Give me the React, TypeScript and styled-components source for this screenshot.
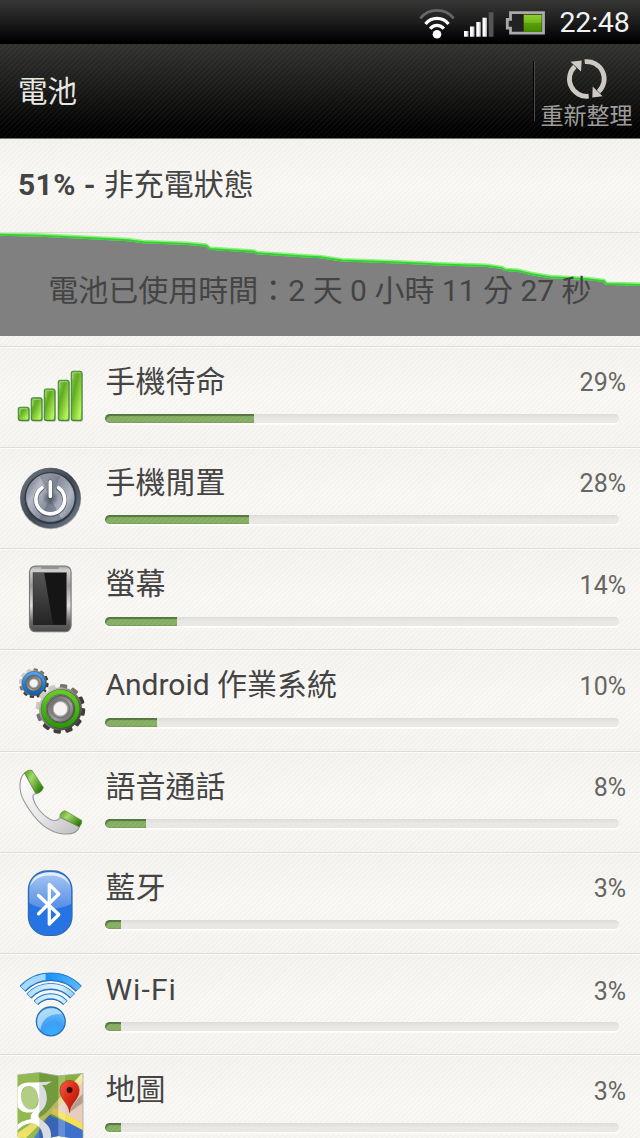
import type { FC } from 'react';
import styled, { createGlobalStyle, css } from 'styled-components';

const Color = {
  TEXT: '#444444',
  TEXT_SUB: '#666664',
  LINE: '#dedcd8',
  PAPER: '#f7f6f3',
  GREEN: '#84ad62',
  CHART: '#808080',
};

const FONT = `Roboto, 'Noto Sans CJK TC', sans-serif`;
const ROW_HEIGHT = 101.25;

const GlobalStyle = createGlobalStyle`
  body {
    margin: 0;
    background: ${Color.PAPER};
    overflow: hidden;
  }
`;

const paperTexture = css`
  background-image: repeating-linear-gradient(
      135deg,
      rgba(120, 110, 80, 0.035) 0,
      rgba(120, 110, 80, 0.035) 1.2px,
      transparent 1.6px,
      transparent 3.2px,
      rgba(120, 110, 80, 0.035) 3.6px
    ),
    linear-gradient(#f5f4f1, #faf9f6 50%, #f6f5f2);
`;

const Screen = styled.div`
  width: 640px;
  height: 1138px;
  overflow: hidden;
  display: flex;
  flex-direction: column;
  font-family: ${FONT};
  color: ${Color.TEXT};
`;

const StatusBarArea = styled.div`
  flex: none;
  box-sizing: border-box;
  height: 44px;
  padding-right: 11px;
  display: flex;
  justify-content: flex-end;
  align-items: flex-start;
  background: linear-gradient(#373736, #1c1c1c 50%, #000 95%);

  svg {
    display: block;
    flex: none;
  }
`;

const WifiStatus = styled.svg`
  margin: 8px 8px 0 0;
`;

const SignalStatus = styled.svg`
  margin: 12px 11px 0 0;
`;

const BatteryStatus = styled.svg`
  margin: 10px 14px 0 0;
`;

const Clock = styled.span`
  width: 69.5px;
  font-size: 28.5px;
  line-height: 46px;
  letter-spacing: -0.2px;
  white-space: nowrap;
  color: #f2f2f2;
`;

const HeaderArea = styled.header`
  flex: none;
  box-sizing: border-box;
  height: 94.5px;
  display: flex;
  align-items: flex-start;
  border-bottom: 1px solid #77716f;
  background-image: repeating-linear-gradient(
      135deg,
      rgba(255, 255, 255, 0.035) 0,
      rgba(255, 255, 255, 0.035) 1px,
      transparent 1.6px,
      transparent 3.2px,
      rgba(255, 255, 255, 0.035) 3.8px
    ),
    linear-gradient(#313130, #1c1c1b 42%, #000 92%);
`;

const HeaderTitle = styled.h1`
  flex: 1;
  margin: 0;
  padding: 24.5px 0 0 18px;
  font-size: 29.5px;
  font-weight: 400;
  line-height: 46px;
  color: #eae8e3;
`;

const Divider = styled.div`
  width: 1px;
  height: 60px;
  margin-top: 17px;
  border-left: 1px solid #000;
  background: #4a4a4a;
`;

const RefreshButton = styled.button`
  width: 105px;
  padding: 13px 2px 0 0;
  border: 0;
  background: none;
  display: flex;
  flex-direction: column;
  align-items: center;
  font-family: inherit;
  font-size: 23px;
  line-height: 32px;
  white-space: nowrap;
  color: #9f9d9a;

  svg {
    display: block;
  }
`;

const Summary = styled.section`
  flex: none;
  box-sizing: border-box;
  height: 94.5px;
  padding: 23px 18px 0;
  border-bottom: 1px solid ${Color.LINE};
  font-size: 30px;
  line-height: 46px;
  ${paperTexture}
`;

const Level = styled.b`
  font-weight: 700;
  letter-spacing: 0.4px;
`;

const HistoryArea = styled.section`
  flex: none;
  box-sizing: border-box;
  position: relative;
  height: 113.5px;
  border-bottom: 1px solid ${Color.LINE};
  ${paperTexture}

  svg {
    display: block;
  }
`;

const Elapsed = styled.p`
  position: absolute;
  top: 35px;
  left: 0;
  width: 100%;
  margin: 0;
  font-size: 30px;
  line-height: 46px;
  text-align: center;
  white-space: nowrap;
`;

const UsageList = styled.ul`
  flex: none;
  margin: 0;
  padding: 0;
  list-style: none;
`;

const UsageRow = styled.li`
  box-sizing: border-box;
  height: ${ROW_HEIGHT}px;
  display: flex;
  padding-left: 15px;
  border-bottom: 1px solid ${Color.LINE};
  box-shadow: inset 0 1px 0 #fcfbf9;
  ${paperTexture}
`;

const Icon = styled.svg`
  flex: none;
  display: block;
  margin-top: 14px;
`;

const Detail = styled.div`
  flex: 1;
  padding: 11.5px 14px 0 18.4px;
`;

const Caption = styled.div<{ $latin: boolean }>`
  height: 46px;
  display: flex;
  justify-content: space-between;
  line-height: 46px;
  white-space: nowrap;
  padding-top: ${({ $latin }) => ($latin ? 1 : 0)}px;
  margin-bottom: ${({ $latin }) => ($latin ? -1 : 0)}px;
`;

const Name = styled.span<{ $latin: boolean }>`
  padding-top: ${({ $latin }) => ($latin ? 0 : 0.5)}px;
  font-size: 30px;
  letter-spacing: ${({ $latin }) => ($latin ? '1.1px' : 'normal')};
`;

const Percent = styled.span`
  font-size: 25px;
  padding-top: 2px;
  color: ${Color.TEXT_SUB};
`;

const Track = styled.div`
  width: 513.5px;
  height: 9px;
  margin-top: 10px;
  border-radius: 4.5px;
  overflow: hidden;
  background: linear-gradient(#dddcd8, #e9e8e5 50%);
  box-shadow: 0 1px 0 #ffffff, 0 2px 0 rgba(255, 255, 255, 0.6);
`;

const Fill = styled.div`
  height: 100%;
  border-radius: 4.5px 0 0 4.5px;
  box-shadow: inset 1px 2px 1px rgba(50, 80, 40, 0.6), inset 0 -1px 0 rgba(80, 110, 60, 0.25);
  background: repeating-linear-gradient(
    135deg,
    ${Color.GREEN} 0,
    ${Color.GREEN} 2px,
    #91b872 2.8px,
    ${Color.GREEN} 3.6px
  );
`;

const SIGNAL_BARS = [
  { x: 3.3, y: 46.3 },
  { x: 16.3, y: 36.9 },
  { x: 29.3, y: 28 },
  { x: 43.3, y: 19.3 },
  { x: 56.3, y: 10.3 },
];

const SignalIcon: FC = () => (
  <Icon height={72} viewBox="0 0 72 72" width={72}>
    <defs>
      <linearGradient id="bar" x1="0" x2="1" y1="0" y2="1">
        <stop offset="0" stopColor="#8fc95c" />
        <stop offset="0.35" stopColor="#62ab20" />
        <stop offset="0.85" stopColor="#b9f75f" />
        <stop offset="1" stopColor="#8ed73a" />
      </linearGradient>
    </defs>
    {SIGNAL_BARS.map(({ x, y }) => (
      <g key={x}>
        <rect fill="#777" fillOpacity="0.5" height={60.3 - y} rx="2.5" width="11" x={x + 0.7} y={y + 0.4} />
        <rect fill="url(#bar)" height={59.4 - y} rx="2" stroke="#418a35" strokeWidth="1.1" width="10.6" x={x} y={y} />
        <path d={`M${x + 1.5} ${y + 8}V${y + 2.2}q0-.8.8-.8H${x + 9}`} fill="none" stroke="#b0db86" strokeWidth="0.8" />
      </g>
    ))}
  </Icon>
);

const PowerIcon: FC = () => (
  <Icon height={72} viewBox="0 0 72 72" width={72}>
    <defs>
      <linearGradient id="rim" x1="0" x2="1" y1="0" y2="1">
        <stop offset="0" stopColor="#707982" />
        <stop offset="0.5" stopColor="#404751" />
        <stop offset="1" stopColor="#737f90" />
      </linearGradient>
      <linearGradient id="face" x1="0" x2="1" y1="0.2" y2="0.8">
        <stop offset="0" stopColor="#727983" />
        <stop offset="0.22" stopColor="#b6bac6" />
        <stop offset="0.5" stopColor="#8b92a0" />
        <stop offset="0.78" stopColor="#b1b7c5" />
        <stop offset="1" stopColor="#7a8290" />
      </linearGradient>
      <radialGradient id="hub">
        <stop offset="0" stopColor="#4c5360" />
        <stop offset="1" stopColor="#4c5360" stopOpacity="0" />
      </radialGradient>
    </defs>
    <circle cx="35.5" cy="36.6" fill="#aaa" r="30.6" />
    <circle cx="35.5" cy="36" fill="url(#rim)" r="30.2" />
    <circle cx="35.5" cy="36" fill="none" r="25" stroke="#343a44" strokeWidth="2" />
    <circle cx="35.3" cy="35.5" fill="url(#face)" r="23.8" stroke="#a3acba" strokeWidth="0.8" />
    <path d="M35.3 36 25 14.5a24 24 0 0 1 20.6 0Z" fill="#596170" fillOpacity="0.4" />
    <path d="M35.3 36 24 57a24 24 0 0 0 22.6 0Z" fill="#4c5564" fillOpacity="0.4" />
    <circle cx="35.3" cy="36" fill="url(#hub)" r="8" />
    <g fill="none" strokeLinecap="round">
      <path d="M27 26.3A14.4 14.4 0 1 0 43.6 26.3M35.3 20v15" stroke="#454c59" strokeOpacity="0.8" strokeWidth="4.8" />
      <path d="M27 25.7A14.4 14.4 0 1 0 43.6 25.7M35.3 19.8v14.6" stroke="#fff" strokeWidth="3.6" />
    </g>
  </Icon>
);

const ScreenIcon: FC = () => (
  <Icon height={72} viewBox="0 0 72 72" width={72}>
    <defs>
      <linearGradient id="shell" x1="0" x2="0" y1="0" y2="1">
        <stop offset="0" stopColor="#9d9d9d" />
        <stop offset="0.06" stopColor="#d0d0d0" />
        <stop offset="0.3" stopColor="#9a9a9a" />
        <stop offset="0.6" stopColor="#e0e0e0" />
        <stop offset="0.85" stopColor="#676767" />
        <stop offset="1" stopColor="#4a4a4a" />
      </linearGradient>
      <linearGradient id="glare" x1="0" x2="0" y1="0" y2="1">
        <stop offset="0" stopColor="#555" />
        <stop offset="1" stopColor="#242424" />
      </linearGradient>
    </defs>
    <rect fill="url(#shell)" height="65.8" rx="6" stroke="#777" strokeWidth="1.1" width="41.6" x="14.5" y="3" />
    <rect fill="#888" height="1.6" rx="0.8" width="18" x="26" y="4.2" />
    <rect fill="#151515" height="52.6" stroke="#666" strokeWidth="0.6" width="33.6" x="18" y="9.6" />
    <path d="M18.3 10h10.9L38 62H18.3Z" fill="url(#glare)" />
  </Icon>
);

type GearProps = {
  cx: number;
  cy: number;
  radius: number;
  ring: string;
  scale: number;
};

const Gear: FC<GearProps> = ({ cx, cy, radius, ring, scale }) => (
  <g transform={`translate(${cx} ${cy})`}>
    {Array.from({ length: 12 }, (_, i) => (
      <rect
        fill={i > 1 && i < 8 ? '#3d3d3d' : i > 8 ? '#cdc9c7' : '#77716f'}
        height={radius * 0.28}
        key={i}
        rx={radius * 0.06}
        transform={`rotate(${i * 30 + 8})`}
        width={radius * 0.3}
        x={-radius * 0.15}
        y={-radius}
      />
    ))}
    <circle fill="url(#steel)" r={radius * 0.87} />
    <circle fill="none" r={radius * 0.68} stroke="#2a4a2a" strokeOpacity="0.7" strokeWidth={5.6 * scale} />
    <circle fill="none" r={radius * 0.68} stroke={ring} strokeWidth={4.6 * scale} />
    <circle fill="url(#core)" r={radius * 0.54} stroke="#555" strokeWidth={scale} />
    <circle fill="none" r={radius * 0.37} stroke="#777" strokeWidth={1.5 * scale} />
    <circle fill="#f5f4f1" r={radius * 0.29} stroke="#aaa" strokeWidth="0.8" />
  </g>
);

const GearsIcon: FC = () => (
  <Icon height={72} viewBox="0 0 72 72" width={72}>
    <defs>
      <linearGradient id="steel" x1="0" x2="1" y1="0" y2="1">
        <stop offset="0" stopColor="#f6f3f3" />
        <stop offset="0.4" stopColor="#8f8986" />
        <stop offset="1" stopColor="#333" />
      </linearGradient>
      <linearGradient id="core" x1="0" x2="1" y1="0" y2="1">
        <stop offset="0" stopColor="#595959" />
        <stop offset="0.6" stopColor="#a1a1a1" />
        <stop offset="1" stopColor="#555" />
      </linearGradient>
      <linearGradient id="blueRing" x1="0" x2="0" y1="0" y2="1">
        <stop offset="0" stopColor="#4ca2f5" />
        <stop offset="1" stopColor="#0865c7" />
      </linearGradient>
      <linearGradient id="greenRing" x1="0" x2="0" y1="0" y2="1">
        <stop offset="0" stopColor="#64cc22" />
        <stop offset="1" stopColor="#2c9b07" />
      </linearGradient>
    </defs>
    <Gear cx={18.8} cy={19.2} radius={14.8} ring="url(#blueRing)" scale={0.65} />
    <Gear cx={45.4} cy={44.8} radius={24.8} ring="url(#greenRing)" scale={1} />
  </Icon>
);

const CallIcon: FC = () => (
  <Icon height={72} viewBox="0 0 72 72" width={72}>
    <defs>
      <linearGradient id="handset" x1="0" x2="1" y1="0" y2="1">
        <stop offset="0" stopColor="#fff" />
        <stop offset="0.55" stopColor="#e6e6e7" />
        <stop offset="1" stopColor="#bdbdc0" />
      </linearGradient>
      <linearGradient id="pad" x1="0" x2="1" y1="0" y2="0.7">
        <stop offset="0" stopColor="#4d981c" />
        <stop offset="0.4" stopColor="#a3da68" />
        <stop offset="1" stopColor="#2c7806" />
      </linearGradient>
    </defs>
    <path
      d="M9.8 7C3.5 12 3.5 25 9 35c10 18 23 32 40 33 8 .4 14-2 15.500-7.500L45 51.500c-1.500 3.500-6 4-10.500 1.500C27 48.500 20 40.500 18 32c-.5-2.500 1-4 3-4.500Z"
      fill="url(#handset)"
      stroke="#97979a"
      strokeWidth="1.1"
    />
    <path d="M9.500 6.700Q12.500 3.500 16.800 4.100L28.400 21.500Q26.500 27 21 27.800Z" fill="url(#pad)" stroke="#5b8d3b" strokeWidth="0.7" />
    <path d="M44.800 50.500Q45.500 45.500 50 44.700L66.800 54.500Q67 58 64.300 61Z" fill="url(#pad)" stroke="#5b8d3b" strokeWidth="0.7" />
  </Icon>
);

const BluetoothIcon: FC = () => (
  <Icon height={72} viewBox="0 0 72 72" width={72}>
    <defs>
      <linearGradient id="gloss" x1="0" x2="0" y1="0" y2="1">
        <stop offset="0" stopColor="#aac8f3" />
        <stop offset="1" stopColor="#538ee5" />
      </linearGradient>
    </defs>
    <rect fill="#2674e3" height="64.6" rx="19" stroke="#316aab" strokeWidth="1.2" width="43.6" x="13.4" y="3.9" />
    <path d="M14.300 39V22.500C14.300 12 22 5 35.200 5s20.900 7 20.900 17.500V37q-9 4.800-21 4.800T14.300 36Z" fill="url(#gloss)" />
    <path d="M15.500 19C18 9 25 5.500 35.200 5.500S52.500 9 55 19C51 11 44 8.500 35.200 8.500S19.500 11 15.500 19Z" fill="#e5effb" />
    <path d="M23.600 28.500 43.800 47.500 34.300 57V17.300L43.800 27 23.600 46.800" fill="none" stroke="#fff" strokeLinecap="round" strokeLinejoin="round" strokeWidth="3.3" />
  </Icon>
);

const WIFI_ARCS = [
  { d: 'M7.7 20.500A38.700 38.700 0 0 1 63.700 20.500', width: 8 },
  { d: 'M14 27.700A29.500 29.500 0 0 1 57.400 27.700', width: 6.6 },
  { d: 'M21 34.500A20.500 20.500 0 0 1 50.400 34.500', width: 6 },
];

const WifiIcon: FC = () => (
  <Icon height={72} viewBox="0 0 72 72" width={72}>
    <defs>
      <linearGradient gradientUnits="userSpaceOnUse" id="wave" x1="4" x2="68" y1="0" y2="0">
        <stop offset="0" stopColor="#a8d9ff" />
        <stop offset="0.41" stopColor="#a3d8fe" />
        <stop offset="0.42" stopColor="#1590fb" />
        <stop offset="1" stopColor="#63bdfc" />
      </linearGradient>
      <linearGradient gradientUnits="userSpaceOnUse" id="waveSoft" x1="10" x2="62" y1="0" y2="0">
        <stop offset="0" stopColor="#abdcff" />
        <stop offset="0.65" stopColor="#e2f5ff" />
        <stop offset="1" stopColor="#79c2fb" />
      </linearGradient>
      <radialGradient cx="0.6" cy="0.95" id="ball" r="0.85">
        <stop offset="0" stopColor="#39aefd" />
        <stop offset="0.5" stopColor="#3d9ff4" />
        <stop offset="1" stopColor="#75bff7" />
      </radialGradient>
    </defs>
    {WIFI_ARCS.map(({ d, width }, i) => (
      <g fill="none" key={d}>
        <path d={d} stroke="#245c9c" strokeWidth={width} transform="translate(0 .5)" />
        <path d={d} stroke="#2680d0" strokeWidth={width} />
        <path d={d} stroke={i === 0 ? 'url(#wave)' : 'url(#waveSoft)'} strokeWidth={width - 1.9} />
      </g>
    ))}
    <circle cx="35.8" cy="53.4" fill="url(#ball)" r="14.4" stroke="#2471b9" strokeWidth="1.3" />
    <path d="M23 59C20 48 27 40.500 36 40.500c5 0 9 2 11 5.500C36 45 27 50 25.500 61.500Z" fill="#d7eefe" fillOpacity="0.6" />
  </Icon>
);

const MapIcon: FC = () => (
  <Icon height={72} viewBox="0 0 72 72" width={72}>
    <defs>
      <clipPath id="sheet">
        <path d="M2.500 6 24.300 3.500 43.300 6.800 68 4.500V71L43.300 67 24.300 71 2.500 68Z" />
      </clipPath>
      <linearGradient id="pin" x1="0" x2="1" y1="0" y2="1">
        <stop offset="0" stopColor="#f35b43" />
        <stop offset="0.5" stopColor="#dc2a17" />
        <stop offset="1" stopColor="#9b1206" />
      </linearGradient>
      <linearGradient id="road" x1="0" x2="1" y1="1" y2="0">
        <stop offset="0" stopColor="#f4e552" />
        <stop offset="0.5" stopColor="#d6cc66" />
        <stop offset="1" stopColor="#f4efae" />
      </linearGradient>
    </defs>
    <g clipPath="url(#sheet)">
      <path d="M0 0h72v72H0z" fill="#85b13c" />
      <path d="M68 12 38 41 68 56Z" fill="#e6cdbd" />
      <path d="M17 72 34 46 72 61v11Z" fill="#3f70cc" />
      <path d="M68 3v10L40 41 30 50 8 72H0V66L31 44Z" fill="url(#road)" />
      <path d="M37 41.500 72 60" fill="none" stroke="#f4e052" strokeWidth="6" />
      <path d="M2 6 24.300 3v69H2Z" fill="#fff" fillOpacity="0.1" />
      <ellipse cx="14.5" cy="29" fill="#fff" fillOpacity="0.3" rx="8.8" ry="11.8" />
      <path
        d="M4 17C8 13 14 13.500 20 13.500L37 12.500 31 16H27C33 22 33.500 34 28 40 23 45 22 46 25 50 31 54 36 58 36 66V72H28C29 62 24 56 18 54 12 54 6 57 2 62V56C7 52 12 51 16 50 15 48 16 45 18 43 10 45 4 42 2 36V19ZM14 17C9 17 6 21 6 27 6 34 10 40.500 16 40.500 21 40.500 24 36 23.500 30 23 22 19 17 14 17Z"
        fill="#fff"
        fillRule="evenodd"
      />
      <path d="M24.300 3 43.300 6v66h-19Z" fill="#1d3048" fillOpacity="0.17" />
      <path d="M43.300 6 50 6v62h-6.700Z" fill="#fff" fillOpacity="0.2" />
    </g>
    <path d="M2.500 6 24.300 3.500 43.300 6.800 68 4.500V71" fill="none" stroke="#a8aaa2" strokeWidth="0.8" />
    <path d="M55 43c3-9 7-12 12.500-18V34Z" fill="#554433" fillOpacity="0.35" />
    <path d="M54.600 43.500C54 34 45 31 45 21a9.600 9.600 0 0 1 19.200 0c0 10-9 13-9.600 22.500Z" fill="url(#pin)" stroke="#b0200f" strokeWidth="0.6" />
    <circle cx="54.6" cy="21" fill="#37100c" r="3" />
  </Icon>
);

type Usage = {
  name: string;
  percent: number;
  Drawing: FC;
  latin?: boolean;
};

const USAGES: Usage[] = [
  { name: '手機待命', percent: 29, Drawing: SignalIcon },
  { name: '手機閒置', percent: 28, Drawing: PowerIcon },
  { name: '螢幕', percent: 14, Drawing: ScreenIcon },
  { name: 'Android 作業系統', percent: 10, Drawing: GearsIcon },
  { name: '語音通話', percent: 8, Drawing: CallIcon },
  { name: '藍牙', percent: 3, Drawing: BluetoothIcon },
  { name: 'Wi-Fi', percent: 3, Drawing: WifiIcon, latin: true },
  { name: '地圖', percent: 3, Drawing: MapIcon },
];

const CURVE =
  '0,1 40,2 82,4 128,6.5 143,8.5 187,10.2 206,11.8 210,15.2 254,18 257,19.5 305,22.7 320,23.5 342,26.7 397,28.7 440,30.8 487,32.3 502,34.3 505,36.3 518,37.2 532,40.5 550,43.5 587,45.4 604,47.3 606,50.2 640,51.3';

const StatusBar: FC = () => (
  <StatusBarArea>
    <WifiStatus fill="none" height={32} stroke="#fff" viewBox="0 0 38 32" width={38}>
      <path d="M2.400 10.300A21.500 21.500 0 0 1 35.600 10.300" stroke="#666" strokeWidth="2.8" />
      <path d="M7.500 16A14.500 14.500 0 0 1 30.500 16" strokeWidth="3.2" />
      <path d="M12.200 20.700A8.500 8.500 0 0 1 25.800 20.700" strokeWidth="3.2" />
      <circle cx="19" cy="26.2" fill="#fff" r="4.3" stroke="none" />
    </WifiStatus>
    <SignalStatus height={25} viewBox="0 0 30 25" width={30}>
      <defs>
        <linearGradient id="cell" x1="0" x2="1" y1="0" y2="0">
          <stop offset="0.45" stopColor="#fff" />
          <stop offset="1" stopColor="#aaa" />
        </linearGradient>
      </defs>
      <g fill="url(#cell)">
        <rect height="5.7" width="4.5" x="0" y="19" />
        <rect height="10.2" width="4.5" x="6" y="14.5" />
        <rect height="14.7" width="4.5" x="12.3" y="10" />
        <rect height="19" width="4.5" x="18.5" y="5.7" />
      </g>
      <rect fill="#555" height="24.5" width="4.8" x="24.7" y="0.2" />
    </SignalStatus>
    <BatteryStatus height={26} viewBox="0 0 41 26" width={41}>
      <defs>
        <linearGradient id="charge" x1="0" x2="0" y1="0" y2="1">
          <stop offset="0" stopColor="#8ed12c" />
          <stop offset="0.45" stopColor="#74b71c" />
          <stop offset="0.5" stopColor="#58a106" />
          <stop offset="1" stopColor="#438c00" />
        </linearGradient>
      </defs>
      <path d="M5.500 2.600h33V23.200h-33v-5H2.300V9.300H5.500Z" fill="#222" stroke="#aaa" strokeWidth="2.8" />
      <rect fill="url(#charge)" height="17.2" width="18" x="18.7" y="4.7" />
    </BatteryStatus>
    <Clock>22:48</Clock>
  </StatusBarArea>
);

const Header: FC = () => (
  <HeaderArea>
    <HeaderTitle>電池</HeaderTitle>
    <Divider />
    <RefreshButton type="button">
      <svg fill="none" height={44} viewBox="0 0 44 44" width={44}>
        <path
          d="M23.700 39.200A17.300 17.300 0 0 1 9.800 9.500M19.700 4.700A17.300 17.300 0 0 1 33.500 34.700"
          stroke="#cdc9c3"
          strokeWidth="4.8"
        />
        <path d="M5.500 4.700 16.700 3.500 16 14.500ZM27.700 29.500 27.300 40.500 37.500 39.300Z" fill="#cdc9c3" />
      </svg>
      重新整理
    </RefreshButton>
  </HeaderArea>
);

const History: FC = () => (
  <HistoryArea>
    <svg height={103} viewBox="0 0 640 103" width={640}>
      <polygon fill={Color.CHART} points={`${CURVE} 640,103 0,103`} />
      <polyline fill="none" points={CURVE} stroke="#8cf27c" strokeWidth="3.4" />
      <polyline fill="none" points={CURVE} stroke="#37cf37" strokeWidth="2" transform="translate(0 .8)" />
    </svg>
    <Elapsed>電池已使用時間：2 天 0 小時 11 分 27 秒</Elapsed>
  </HistoryArea>
);

const App: FC = () => (
  <Screen>
    <GlobalStyle />
    <StatusBar />
    <Header />
    <Summary>
      <Level>51% - </Level>
      非充電狀態
    </Summary>
    <History />
    <UsageList>
      {USAGES.map(({ name, percent, Drawing, latin = false }) => (
        <UsageRow key={name}>
          <Drawing />
          <Detail>
            <Caption $latin={latin}>
              <Name $latin={latin}>{name}</Name>
              <Percent>{percent}%</Percent>
            </Caption>
            <Track>
              <Fill style={{ width: `${percent}%` }} />
            </Track>
          </Detail>
        </UsageRow>
      ))}
    </UsageList>
  </Screen>
);

export default App;
